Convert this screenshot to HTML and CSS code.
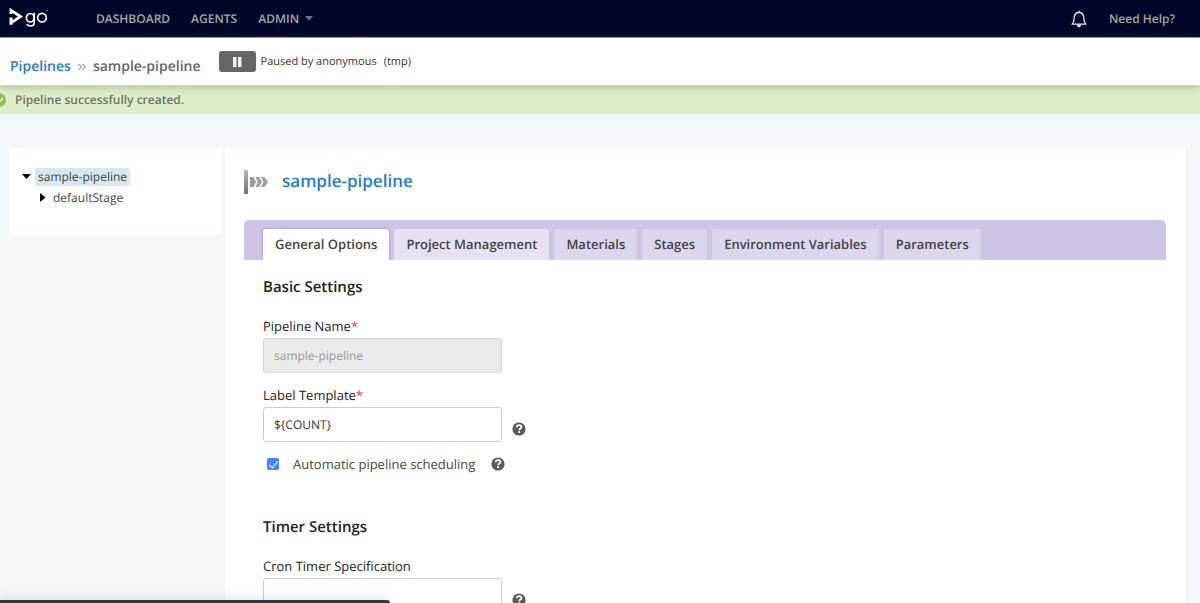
FILE: index.html
```html
<!DOCTYPE html>
<html lang="en">
<head>
<meta charset="utf-8">
<title>sample-pipeline - Go</title>
<link rel="stylesheet" href="styles.css">
</head>
<body>
<svg class="defs" aria-hidden="true">
  <symbol id="help" viewBox="0 0 14 14">
    <circle cx="7" cy="7" r="6.6" fill="#5b5b5b"/>
    <path d="M4.7 5.3C4.8 3.9 5.7 3.2 7.1 3.2c1.4 0 2.4.8 2.4 1.9C9.5 6.6 7.300 6.500 7.200 8.200" fill="none" stroke="#fff" stroke-width="1.700"/>
    <rect x="6.200" y="9.200" width="1.900" height="1.800" fill="#fff"/>
  </symbol>
</svg>
<header class="site-header">
  <a class="logo" href="#" aria-label="go">
    <svg width="40" height="22" viewBox="0 0 40 22" fill="none" stroke="#fff">
      <path d="M2 6V2.300L11.500 8.500L2 14.800" stroke-width="2.800" stroke-linejoin="miter"/>
      <path d="M2 9.500V16.800" stroke-width="3"/>
      <ellipse cx="21.200" cy="9.700" rx="3.800" ry="4.200" stroke-width="1.700"/>
      <path d="M25.200 4.800V14.500Q25.200 18 21.500 18Q18.800 18 17.700 16.300" stroke-width="1.700"/>
      <circle cx="33" cy="9.700" r="4.300" stroke-width="1.700"/>
      <path d="M37.500 2.500h1.500" stroke-width="1" stroke="#888"/>
    </svg>
  </a>
  <nav class="site-nav">
    <a href="#">DASHBOARD</a>
    <a href="#">AGENTS</a>
    <a class="has-menu" href="#">ADMIN
      <svg width="8" height="5" viewBox="0 0 8 5"><path d="M0 0h8L4 4.500z" fill="#647984"/></svg>
    </a>
  </nav>
  <button class="bell" type="button" aria-label="Notifications">
    <svg width="16" height="18" viewBox="0 0 16 18">
      <path d="M1 14.200C3.500 12.200 3 9.500 3.300 7 3.600 4 5.400 2.500 8 2.500S12.400 4 12.700 7C13 9.500 12.500 12.200 15 14.200z" fill="none" stroke="#e4e4e4" stroke-width="1.300" stroke-linejoin="round"/>
      <path d="M5.600 14.500h4.800Q10 17.200 8 17.200T5.600 14.500zM7.300 0.800h1.400v2H7.300z" fill="#e4e4e4"/>
    </svg>
  </button>
  <a class="need-help" href="#">Need Help?</a>
</header>
<div class="page-header">
  <nav class="breadcrumb">
    <a href="#">Pipelines</a>
    <svg width="8" height="9" viewBox="0 0 8 9" fill="none" stroke="#999" stroke-width="1.200"><path d="M.5.800L3.500 3.800 .500 6.800M4.300.800L7.300 3.800 4.300 6.800"/></svg>
    <span>sample-pipeline</span>
  </nav>
  <div class="pause">
    <button type="button" aria-label="Paused">
      <svg width="9" height="10" viewBox="0 0 9 10" fill="#eee"><path d="M0 0h3.500v10H0zM5 0h3.500v10H5z"/></svg>
    </button>
    <span>Paused by anonymous</span>
    <span class="reason">(tmp)</span>
  </div>
</div>
<div class="flash" role="status">
  <svg class="flash-icon" width="14" height="14" viewBox="0 0 14 14"><circle cx="7" cy="7" r="7" fill="#92c05a"/><path d="M4 7l2.500 2.500L11 5" fill="none" stroke="#e6f2d5" stroke-width="1.600"/></svg>
  <p>Pipeline successfully created.</p>
</div>
<div class="layout">
  <aside class="tree">
    <ul>
      <li>
        <svg width="9" height="5" viewBox="0 0 9 5"><path d="M0 0h9L4.500 5z"/></svg>
        <a class="selected" href="#">sample-pipeline</a>
      </li>
      <li class="child">
        <svg width="6" height="9" viewBox="0 0 6 9"><path d="M0 0v9L5.500 4.500z"/></svg>
        <a href="#">defaultStage</a>
      </li>
    </ul>
  </aside>
  <main class="panel">
    <div class="title">
      <svg width="24" height="24" viewBox="0 0 24 24">
        <defs><linearGradient id="metal" x1="0" y1="0" x2="0" y2="1"><stop offset="0" stop-color="#b8b8b8"/><stop offset="1" stop-color="#707070"/></linearGradient></defs>
        <path d="M0 0h4v24H0z" fill="url(#metal)"/>
        <path d="M6 7h3.500l2.500 5-2.500 5H6zM11.500 7h3.500l3 5-3 5h-3.500l2.500-5zM17 7h3.500l3.500 5-3.500 5H17l2.500-5z" fill="#9d9d9d"/>
      </svg>
      <h1>sample-pipeline</h1>
    </div>
    <nav class="tabs">
      <a class="active" href="#">General Options</a>
      <a class="hover" href="#">Project Management</a>
      <a href="#">Materials</a>
      <a href="#">Stages</a>
      <a href="#">Environment Variables</a>
      <a href="#">Parameters</a>
    </nav>
    <form class="settings">
      <section>
        <h2>Basic Settings</h2>
        <div class="field">
          <label for="name">Pipeline Name<span class="required">*</span></label>
          <div class="control"><input id="name" type="text" value="sample-pipeline" disabled></div>
        </div>
        <div class="field">
          <label for="template">Label Template<span class="required">*</span></label>
          <div class="control">
            <input id="template" type="text" value="${COUNT}">
            <svg class="help" width="14" height="14"><use href="#help"/></svg>
          </div>
        </div>
        <div class="check">
          <input id="auto" type="checkbox" checked>
          <label for="auto">Automatic pipeline scheduling</label>
          <svg width="14" height="14"><use href="#help"/></svg>
        </div>
      </section>
      <section>
        <h2>Timer Settings</h2>
        <div class="field">
          <label for="cron">Cron Timer Specification</label>
          <div class="control">
            <input id="cron" type="text">
            <svg class="help" width="14" height="14"><use href="#help"/></svg>
          </div>
        </div>
      </section>
    </form>
  </main>
</div>
<div class="link-status"></div>
</body>
</html>
```

FILE: styles.css
```css
* { box-sizing: border-box; }
body {
  margin: 0;
  height: 100vh;
  overflow: hidden;
  background: #f3f7f8;
  color: #333;
  font-family: "Open Sans", sans-serif;
  font-size: 13px;
  line-height: 20px;
  text-rendering: geometricPrecision;
}
a { color: inherit; text-decoration: none; }
svg { display: block; flex: none; }
h1, h2, p, ul { margin: 0; padding: 0; }
button { border: 0; padding: 0; background: none; }
.defs { position: absolute; width: 0; height: 0; }

.site-header {
  display: flex;
  align-items: center;
  height: 38px;
  padding: 0 25px 0 9px;
  background: #000728;
  border-bottom: 1px solid #a29fb5;
  color: #a5a6a9;
  font-size: 12px;
  font-weight: 600;
}
.site-nav { display: flex; gap: 21px; margin-left: 47px; flex: 1; }
.has-menu { display: flex; align-items: center; gap: 6px; }
.bell { margin-right: 22px; }

.page-header {
  position: relative;
  display: flex;
  align-items: flex-start;
  gap: 18px;
  height: 48px;
  padding: 13px 10px 0;
  background: #fff;
  border-bottom: 1px solid #cfdcc5;
  box-shadow: 0 1px 8px rgba(90, 110, 80, .4);
}
.breadcrumb {
  display: flex;
  align-items: center;
  gap: 7px;
  padding-top: 6px;
  color: #666;
  font-size: 14px;
  font-weight: 600;
}
.breadcrumb a { color: #2d7bc0; }
.pause { display: flex; align-items: center; gap: 5px; font-size: 11px; }
.pause button {
  display: grid;
  place-items: center;
  width: 37px;
  height: 21px;
  border-radius: 3px;
  background: #666;
}
.reason { margin-left: 2px; }

.flash {
  display: flex;
  align-items: center;
  gap: 9px;
  height: 28px;
  background: #deecc9;
  color: #707368;
  font-size: 12px;
  font-weight: 600;
}
.flash-icon { margin-left: -8px; }

.layout {
  display: grid;
  grid-template-columns: 211px minmax(0, 1fr);
  align-items: start;
  gap: 4px;
  padding: 34px 15px 0 10px;
}
.tree {
  padding: 18px 12px 26px;
  background: #fff;
  border-radius: 3px;
  color: #444;
  font-size: 12px;
}
.tree ul { list-style: none; }
.tree li { display: flex; align-items: center; gap: 4px; height: 21px; }
.tree .child { padding-left: 18px; }
.tree li a { padding: 0 3px; line-height: 18px; border-radius: 3px; }
.tree .selected { background: #d5e8ed; }

.panel {
  min-height: 500px;
  padding: 22px 19px;
  background: #fff;
  border-radius: 3px;
}
.title { display: flex; align-items: center; gap: 14px; }
.title h1 { color: #2d7bc0; font-size: 17px; font-weight: 600; line-height: 22px; padding-bottom: 2px; }

.tabs {
  display: flex;
  gap: 5px;
  height: 40px;
  margin-top: 26px;
  padding: 9px 19px 0;
  overflow: hidden;
  background: #cec4e6;
  border-radius: 5px 5px 0 0;
  color: #444;
  font-size: 13px;
  font-weight: 600;
  line-height: 31px;
}
.tabs a { padding: 0 12px; background: #dcd6ec; border-radius: 3px 3px 0 0; }
.tabs .hover { background: #e6e1f2; }
.tabs .active { background: #fff; box-shadow: 0 0 3px #9488af; }

.settings { padding: 17px 19px 0; }
section { margin-bottom: 43px; }
h2 { color: #222; font-size: 15px; font-weight: 600; line-height: 20px; }
.field { margin-top: 12px; }
h2 + .field { margin-top: 19px; }
.field label { display: block; color: #222; padding-bottom: 2px; }
.required { color: #d83a35; }
.control { display: flex; align-items: center; gap: 10px; }
.control input {
  width: 239px;
  height: 35px;
  margin: 0;
  padding: 0 10px;
  border: 1px solid #ccc;
  border-radius: 3px;
  background: #fff;
  color: #333;
  font: 12px "Open Sans", sans-serif;
  text-rendering: inherit;
}
.control input:disabled { background: #eaeaea; color: #999; border-color: #d5d5d5; }
.help { margin-top: 9px; }
.check { display: flex; align-items: center; margin: 12px 0 0 4px; color: #444; }
.check input {
  appearance: none;
  display: grid;
  place-items: center;
  width: 12px;
  height: 12px;
  margin: 0 14px 0 0;
  border-radius: 2px;
  background: #4286f5;
}
.check input:checked::before {
  content: "";
  width: 4px;
  height: 8px;
  margin-bottom: 2px;
  border: solid #fff;
  border-width: 0 1px 1px 0;
  transform: rotate(40deg);
}
.check svg { margin-left: 16px; }

.link-status {
  position: fixed;
  bottom: 0;
  left: 0;
  width: 390px;
  height: 3px;
  background: #30373a;
  border-radius: 0 3px 0 0;
  box-shadow: 0 0 12px rgba(0, 0, 0, .3);
}
```
